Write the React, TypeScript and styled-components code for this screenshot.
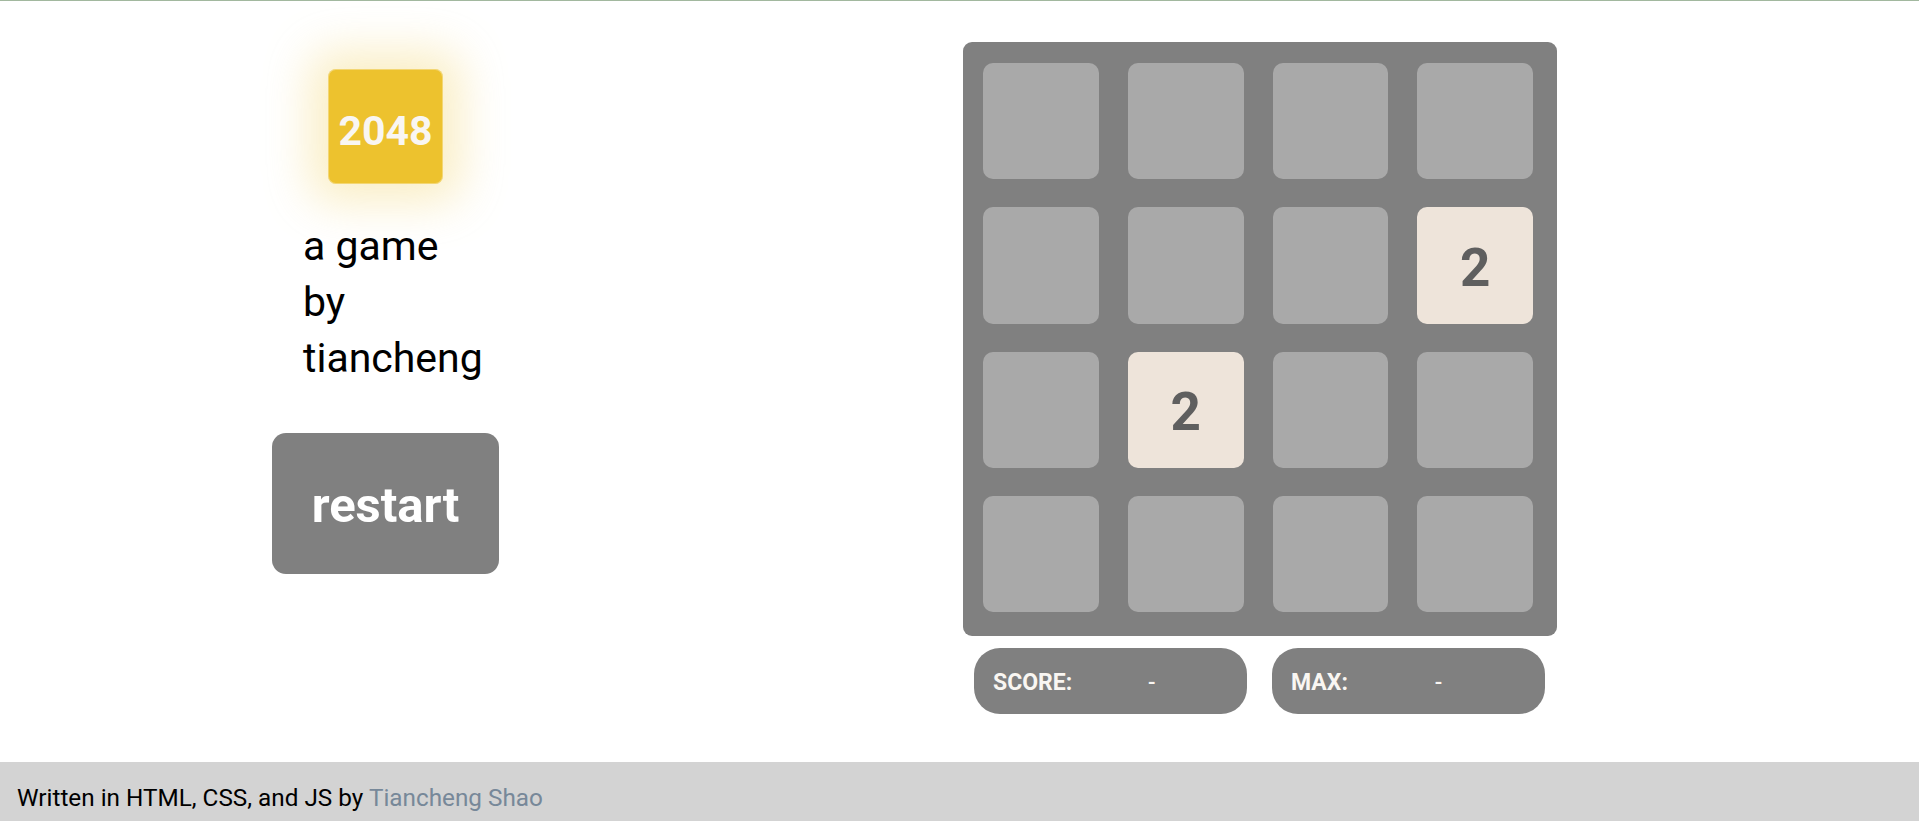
import React from "react";
import styled, { createGlobalStyle } from "styled-components";

const GlobalStyle = createGlobalStyle`
  html, body {
    margin: 0;
    padding: 0;
    background: #ffffff;
    font-family: Roboto, "Liberation Sans", sans-serif;
  }
  * { box-sizing: border-box; }
`;

const Page = styled.div`
  min-height: 100vh;
  display: flex;
  flex-direction: column;
  border-top: 1px solid #a2b89f;
`;

const Main = styled.main`
  display: flex;
  align-items: flex-start;
  padding-left: 272px;
  gap: 464px;
`;

const LeftColumn = styled.section`
  width: 227px;
  display: flex;
  flex-direction: column;
  align-items: center;
  padding-top: 68px;
`;

const LogoTile = styled.div`
  width: 115px;
  height: 115px;
  border-radius: 8px;
  background: #edc22e;
  color: #f9f6f2;
  font-weight: 700;
  font-size: 41px;
  padding-top: 9px;
  display: flex;
  align-items: center;
  justify-content: center;
  box-shadow: 0 0 45px 18px rgba(243, 215, 116, 0.42), inset 0 0 0 1px rgba(255, 255, 255, 0.33);
`;

const Tagline = styled.p`
  align-self: flex-start;
  margin: 34px 0 0 31px;
  font-size: 41px;
  line-height: 56px;
  color: #000;
`;

const RestartButton = styled.button`
  margin-top: 47px;
  width: 227px;
  height: 141px;
  border: none;
  border-radius: 14px;
  background: #808080;
  color: #ffffff;
  font-family: Roboto, "Liberation Sans", sans-serif;
  font-weight: 700;
  font-size: 49px;
  padding-top: 4px;
  cursor: pointer;
`;

const GameColumn = styled.section`
  width: 594px;
  padding-top: 41px;
  display: flex;
  flex-direction: column;
`;

const Board = styled.div`
  width: 594px;
  height: 594px;
  background: #808080;
  border-radius: 9px;
  padding: 21px 24px 24px 20px;
  display: grid;
  grid-template-columns: repeat(4, 1fr);
  grid-template-rows: repeat(4, 1fr);
  column-gap: 29px;
  row-gap: 28px;
`;

const Cell = styled.div<{ $value: number }>`
  border-radius: 10px;
  background: ${(p) => (p.$value ? "#eee4da" : "#a9a9a9")};
  color: #5f5f5f;
  font-weight: 700;
  font-size: 53px;
  padding-top: 5px;
  display: flex;
  align-items: center;
  justify-content: center;
`;

const ScoreRow = styled.div`
  display: flex;
  gap: 25px;
  padding: 0 12px 0 11px;
  margin-top: 12px;
`;

const ScorePill = styled.div`
  flex: 1;
  height: 66px;
  border-radius: 26px;
  background: #808080;
  display: flex;
  align-items: center;
  padding: 3px 16px 0 19px;
  color: #f9f6f2;
`;

const PillLabel = styled.span`
  font-weight: 700;
  font-size: 23px;
`;

const PillValue = styled.span`
  flex: 1;
  text-align: center;
  font-size: 22px;
  font-weight: 500;
`;

const Footer = styled.footer`
  margin-top: auto;
  height: 59px;
  background: #d3d3d3;
  padding: 21px 17px 0;
  font-size: 24.3px;
  color: #000;
`;

const FooterLink = styled.a`
  color: #778899;
  text-decoration: none;
`;

const board: number[][] = [
  [0, 0, 0, 0],
  [0, 0, 0, 2],
  [0, 2, 0, 0],
  [0, 0, 0, 0],
];

export default function App() {
  return (
    <>
      <GlobalStyle />
      <Page>
        <Main>
          <LeftColumn>
            <LogoTile>2048</LogoTile>
            <Tagline>
              a game
              <br />
              by
              <br />
              tiancheng
            </Tagline>
            <RestartButton>restart</RestartButton>
          </LeftColumn>
          <GameColumn>
            <Board>
              {board.flatMap((row, r) =>
                row.map((v, c) => (
                  <Cell key={`${r}-${c}`} $value={v}>
                    {v ? v : ""}
                  </Cell>
                ))
              )}
            </Board>
            <ScoreRow>
              <ScorePill>
                <PillLabel>SCORE:</PillLabel>
                <PillValue>-</PillValue>
              </ScorePill>
              <ScorePill>
                <PillLabel>MAX:</PillLabel>
                <PillValue>-</PillValue>
              </ScorePill>
            </ScoreRow>
          </GameColumn>
        </Main>
        <Footer>
          Written in HTML, CSS, and JS by <FooterLink href="#">Tiancheng Shao</FooterLink>
        </Footer>
      </Page>
    </>
  );
}
